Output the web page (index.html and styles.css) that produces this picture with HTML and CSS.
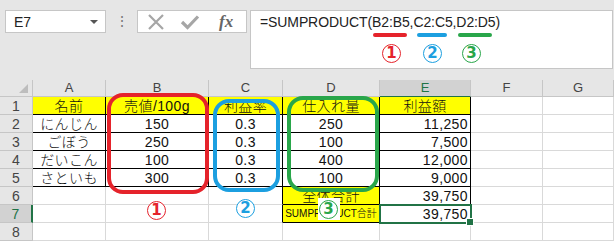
FILE: index.html
```html
<!DOCTYPE html>
<html lang="ja">
<head>
    <meta charset="UTF-8">
    <title>SUMPRODUCT</title>
    <link rel="stylesheet" href="styles.css">
</head>
<body>
    <div class="toolbar">
        <div class="name-box">
            <span>E7</span>
            <span class="caret"></span>
        </div>
        <div class="grip">&#8942;</div>
        <div class="fx-box">
            <svg class="ico" width="18" height="18" viewBox="0 0 18 18"><path d="M2 2 L16 16 M16 2 L2 16" stroke="#a6a6a6" stroke-width="2.2" fill="none"/></svg>
            <svg class="ico" width="20" height="18" viewBox="0 0 20 18"><path d="M2 9 L7.5 14.5 L18 3.5" stroke="#a6a6a6" stroke-width="3.2" fill="none"/></svg>
            <span class="fx">fx</span>
        </div>
        <div class="formula">
            <span class="formula-text">=SUMPRODUCT(B2:B5,C2:C5,D2:D5)</span>
            <span class="bar red" style="left:122px"></span>
            <span class="bar blue" style="left:166px"></span>
            <span class="bar green" style="left:207px"></span>
            <span class="badge red" style="left:131px;top:33px">1</span>
            <span class="badge blue" style="left:172px;top:33px">2</span>
            <span class="badge green" style="left:211px;top:33px">3</span>
        </div>
    </div>

    <div class="sheet">
        <div class="c h corner"><span class="tri"></span></div>
        <div class="c h">A</div>
        <div class="c h">B</div>
        <div class="c h">C</div>
        <div class="c h">D</div>
        <div class="c h active-col">E</div>
        <div class="c h">F</div>
        <div class="c h">G</div>

        <div class="c h rh">1</div>
        <div class="c y k">名前</div>
        <div class="c y k">売値/100g</div>
        <div class="c y k">利益率</div>
        <div class="c y k">仕入れ量</div>
        <div class="c y k">利益額</div>
        <div class="c"></div>
        <div class="c"></div>

        <div class="c h rh">2</div>
        <div class="c k">にんじん</div>
        <div class="c k">150</div>
        <div class="c k">0.3</div>
        <div class="c k">250</div>
        <div class="c k r">11,250</div>
        <div class="c"></div>
        <div class="c"></div>

        <div class="c h rh">3</div>
        <div class="c k">ごぼう</div>
        <div class="c k">250</div>
        <div class="c k">0.3</div>
        <div class="c k">100</div>
        <div class="c k r">7,500</div>
        <div class="c"></div>
        <div class="c"></div>

        <div class="c h rh">4</div>
        <div class="c k">だいこん</div>
        <div class="c k">100</div>
        <div class="c k">0.3</div>
        <div class="c k">400</div>
        <div class="c k r">12,000</div>
        <div class="c"></div>
        <div class="c"></div>

        <div class="c h rh">5</div>
        <div class="c k">さといも</div>
        <div class="c k">300</div>
        <div class="c k">0.3</div>
        <div class="c k">100</div>
        <div class="c k r">9,000</div>
        <div class="c"></div>
        <div class="c"></div>

        <div class="c h rh">6</div>
        <div class="c"></div>
        <div class="c"></div>
        <div class="c kr"></div>
        <div class="c y k">全体合計</div>
        <div class="c k r">39,750</div>
        <div class="c"></div>
        <div class="c"></div>

        <div class="c h rh active-row">7</div>
        <div class="c"></div>
        <div class="c"></div>
        <div class="c kr"></div>
        <div class="c y k small">SUMPRODUCT合計</div>
        <div class="c r selected">39,750<span class="handle"></span></div>
        <div class="c"></div>
        <div class="c"></div>

        <div class="c h rh">8</div>
        <div class="c"></div>
        <div class="c"></div>
        <div class="c"></div>
        <div class="c"></div>
        <div class="c"></div>
        <div class="c"></div>
        <div class="c"></div>

        <!-- annotations drawn over the sheet -->
        <div class="ring red" style="left:107px;top:13px;width:102px;height:101px"></div>
        <div class="ring blue" style="left:213px;top:19px;width:67px;height:93px"></div>
        <div class="ring green" style="left:287px;top:16px;width:92px;height:96px"></div>
        <span class="badge red" style="left:147px;top:121px">1</span>
        <span class="badge blue" style="left:236px;top:119px">2</span>
        <span class="patch"><span class="badge green">3</span></span>
    </div>
</body>
</html>
```

FILE: styles.css
```css
body {
    margin: 0;
    background: #fff;
    font-family: "Liberation Sans", "Noto Sans CJK JP", sans-serif;
    overflow: hidden;
}
.toolbar {
    display: flex;
    align-items: flex-start;
    height: 80px;
    box-sizing: border-box;
    padding: 10px 1px 0 5px;
    background: #e6e6e6;
}
.name-box {
    width: 101px;
    height: 23px;
    box-sizing: border-box;
    border: 1px solid #c6c6c6;
    background: #fff;
    display: flex;
    align-items: center;
    justify-content: space-between;
    padding: 0 7px 0 8px;
    font-size: 14px;
    color: #222;
}
.caret {
    width: 0;
    height: 0;
    border-left: 4px solid transparent;
    border-right: 4px solid transparent;
    border-top: 4px solid #555;
}
.grip {
    width: 31px;
    text-align: center;
    color: #777;
    font-size: 14px;
    line-height: 23px;
}
.fx-box {
    width: 110px;
    height: 23px;
    box-sizing: border-box;
    border: 1px solid #c6c6c6;
    background: #fff;
    display: flex;
    align-items: center;
    padding-left: 9px;
    gap: 15px;
}
.fx {
    font-family: "Liberation Serif", serif;
    font-style: italic;
    font-weight: 700;
    font-size: 17px;
    color: #666;
    margin-left: 4px;
}
.formula {
    position: relative;
    flex: 1;
    height: 59px;
    margin-left: 3px;
    box-sizing: border-box;
    border: 1px solid #c6c6c6;
    background: #fff;
    padding: 2px 0 0 9px;
}
.formula-text {
    font-size: 14px;
    color: #222;
    letter-spacing: -0.1px;
}
.bar {
    position: absolute;
    top: 22px;
    width: 34px;
    height: 4px;
    border-radius: 2px;
}
.bar.red { background: #e5232b; }
.bar.blue { background: #1c9fe0; width: 30px; }
.bar.green { background: #29a64a; }

.badge {
    position: absolute;
    width: 19px;
    height: 19px;
    box-sizing: border-box;
    border: 1px solid;
    border-radius: 50%;
    text-align: center;
    font-family: "DejaVu Sans", sans-serif;
    font-weight: 700;
    font-size: 15px;
    line-height: 17px;
    background: #fff;
}
.badge.red { color: #e5232b; }
.badge.blue { color: #1c9fe0; }
.badge.green { color: #29a64a; }

.sheet {
    position: relative;
    display: grid;
    grid-template-columns: 33px 73px 103px 74px 97px 91px 72px 71px;
    grid-template-rows: 17px repeat(8, 18px) 3px;
}
.c {
    box-sizing: border-box;
    border-right: 1px solid #d9d9d9;
    border-bottom: 1px solid #d9d9d9;
    font-size: 14px;
    line-height: 18px;
    font-weight: 300;
    letter-spacing: 0.4px;
    color: #111;
    text-align: center;
    white-space: nowrap;
}
.h {
    background: #e6e6e6;
    border-color: #c6c6c6;
    color: #444;
    font-size: 13px;
    font-weight: 400;
    letter-spacing: 0;
    line-height: 16px;
}
.rh {
    font-size: 14px;
    line-height: 18px;
}
.corner {
    position: relative;
}
.tri {
    position: absolute;
    right: 4px;
    bottom: 3px;
    width: 0;
    height: 0;
    border-left: 9px solid transparent;
    border-bottom: 9px solid #bdbdbd;
}
.active-col {
    background: #d2d2d2;
    color: #217346;
    border-bottom: 1px solid #217346;
}
.active-row {
    background: #d2d2d2;
    color: #217346;
    border-right: 2px solid #217346;
}
.y { background: #ffff00; }
.k {
    border-right-color: #000;
    border-bottom-color: #000;
}
.kr { border-right-color: #000; }
.r {
    text-align: right;
    padding-right: 2px;
}
.small {
    font-size: 10px;
    letter-spacing: 0;
}
.selected {
    position: relative;
    outline: 2px solid #217346;
    outline-offset: -1px;
}
.handle {
    position: absolute;
    right: -4px;
    bottom: -4px;
    width: 6px;
    height: 6px;
    background: #217346;
    border: 1px solid #fff;
}
.ring {
    position: absolute;
    box-sizing: border-box;
    border: 4px solid;
    border-radius: 16px;
}
.ring.red { border-color: #e5232b; }
.ring.blue { border-color: #1c9fe0; }
.ring.green { border-color: #29a64a; }
.patch {
    position: absolute;
    left: 318px;
    top: 118px;
    width: 22px;
    height: 22px;
    background: #fff;
}
.patch .badge {
    left: 1px;
    top: 2px;
}
```
